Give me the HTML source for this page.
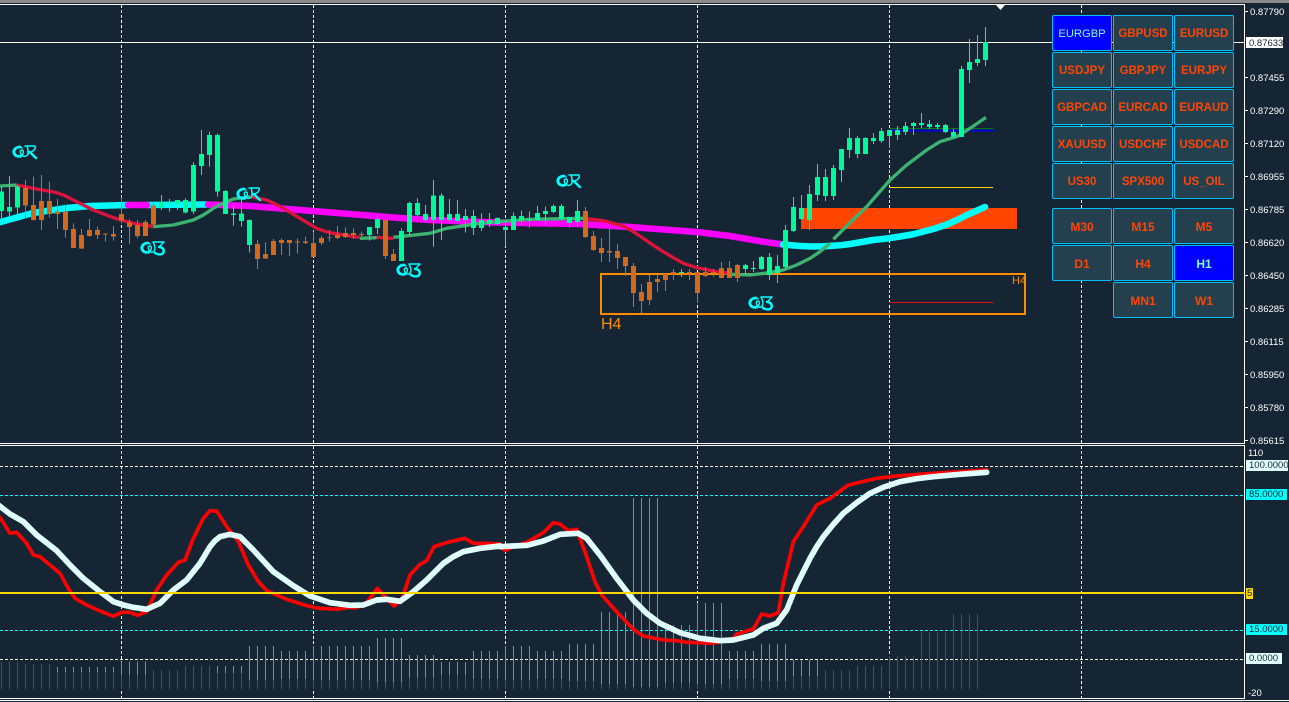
<!DOCTYPE html>
<html><head><meta charset="utf-8"><title>EURGBP H1</title>
<style>
html,body{margin:0;padding:0;width:1289px;height:702px;overflow:hidden;background:#152533;font-family:"Liberation Sans",sans-serif}
#c{position:absolute;left:0;top:0}
.b{position:absolute;width:58px;height:34px;border:1px solid #00bfff;border-radius:2px;background:#24404f;color:#ff4500;font:bold 11.5px/36px "Liberation Sans",sans-serif;text-align:center}
.a{background:#0000ff;color:#7fffd4}
.t{font-size:12px}
.l{position:absolute;left:1250px;color:#fff;font-size:9.5px;line-height:11px;height:11px;white-space:nowrap;margin-top:1px}
.x{position:absolute;left:1246px;height:11px;color:#152533;font-size:9.5px;line-height:11px;padding-left:3px;white-space:nowrap;box-sizing:border-box}
.h{position:absolute;color:#ff8c00;white-space:nowrap}
</style></head><body>
<svg id="c" width="1289" height="702" viewBox="0 0 1289 702" fill="none">
<rect x="0" y="0" width="1289" height="3" fill="#8a8a8a"/>
<g shape-rendering="crispEdges">
<rect x="0" y="4" width="1245" height="1" fill="#fff"/>
<rect x="0" y="443" width="1245" height="1" fill="#fff"/>
<rect x="0" y="445" width="1245" height="1" fill="#fff"/>
<rect x="0" y="698" width="1245" height="1" fill="#fff"/>
<rect x="0" y="700" width="1289" height="1" fill="#fff"/>
<rect x="1244" y="4" width="1" height="440" fill="#fff"/>
<rect x="1244" y="445" width="1" height="254" fill="#fff"/>
<path d="M121.5 5V443M313.5 5V443M505.5 5V443M697.5 5V443M889.5 5V443M1081.5 5V443M121.5 446V698M313.5 446V698M505.5 446V698M697.5 446V698M889.5 446V698M1081.5 446V698" stroke="#fff" stroke-dasharray="3 2"/>
<path d="M0 466.5H1244M0 659.5H1244" stroke="#fff" stroke-dasharray="3 2"/>
<path d="M0 495.5H1244M0 630.5H1244" stroke="#00ffff" stroke-dasharray="3 2"/>
<path d="M1245 11.5h3M1245 77.5h3M1245 110.5h3M1245 143.5h3M1245 176.5h3M1245 209.5h3M1245 242.5h3M1245 275.5h3M1245 308.5h3M1245 341.5h3M1245 374.5h3M1245 407.5h3M1245 440.5h3" stroke="#fff"/>
<rect x="0" y="42" width="1245" height="1" fill="#fff"/>
<rect x="801" y="208" width="216" height="21" fill="#ff4500"/>
<path d="M889 187.5H993" stroke="#ffd700"/>
<path d="M889 128.5H993" stroke="#008000"/>
<path d="M889 130.5H993" stroke="#0000e0" stroke-width="2"/>
<path d="M889 302.5H993" stroke="#e01010"/>
<rect x="601" y="274" width="424" height="40" stroke="#ff8c00" stroke-width="2"/>
</g>
<path d="M996 5H1005L1000.5 10Z" fill="#fff"/>

<!-- thick MA -->
<g stroke-width="6.5" stroke-linecap="round" stroke-linejoin="round">
<path stroke="#00ffff" d="M-3 223L33 213L67 208L90 206L128 205M147 205L208 204.5"/>
<path stroke="#ff00ff" d="M128 205H147M208 204.5L250 206L300 210L350 214L400 218L430 220L480 222L520 223L580 224L630 227L697 232L730 236L763 241.7L783 244.5"/>
<path stroke="#00ffff" d="M783 244.5L800 246L812 246.5L825 246.3L840 245.3L850 244L862 242L873 240L887 238.5L900 236.5L912 234.5L922 232L935 228.5L947 224.5L957 220L967 215L977 210.5L985 207"/>
</g>
<!-- thin MA -->
<g stroke-width="10" stroke-linejoin="round">
<g transform="translate(0,130) scale(.33333)">
<path stroke="#3cb371" d="M0 168L50 165M460 290L520 285L580 270L610 255L640 235L670 219L700 207L750 200M1080 325L1130 323M1180 322L1290 310"/>
<path stroke="#dc143c" d="M50 165L100 175L170 188L195 197L220 210L280 240L340 263L400 280L460 290M750 200L800 210L825 221L850 235L900 265L950 295L975 304L1000 310L1080 323M1130 322L1180 325"/>
</g>
<g transform="translate(430,170) scale(.33333)">
<path stroke="#3cb371" d="M0 190L50 175L130 163L200 155L300 148L460 145M900 313L960 315L1010 309L1060 300L1100 285L1140 265L1170 245L1200 220"/>
<path stroke="#dc143c" d="M460 145L520 152L580 168L610 185L640 205L670 226L700 245L730 263L760 280L800 293L850 303L900 310"/>
</g>
<g transform="translate(780,0) scale(.33333)">
<path stroke="#3cb371" d="M160 718L210 668L260 620L295 580L330 540L380 495L440 450L480 425L530 410L570 385L618 352"/>
</g>
</g>

<!-- candles -->
<g shape-rendering="crispEdges">
<g transform="translate(0,130) scale(1,.33333)">
<path stroke="#00fa9a" d="M1.5 170V270M9.5 138V258M17.5 165V258M161.5 195V240M169.5 207V245M177.5 210V240M185.5 205V250M193.5 97V252M201.5 0V135M209.5 5V110M217.5 10V200M225.5 180V252M233.5 225V287M241.5 205V290M249.5 268V367M369.5 291V332M377.5 255V312M401.5 295V393M409.5 215V315M417.5 205V258M425.5 225V275"/>
<path stroke="#00fa9a" stroke-width="5" d="M1.5 185V243M9.5 231V245M17.5 170V232M161.5 216V232M169.5 216V220M177.5 210V222M185.5 210V247M193.5 105V245M201.5 72V108M209.5 15V75M217.5 15V185M225.5 183V252M233.5 250V255M241.5 250V273M249.5 270V345M369.5 291V315M377.5 267V294M401.5 303V393M409.5 219V306M417.5 219V255M425.5 252V270"/>
<path stroke="#d2691e" d="M25.5 150V265M33.5 140V272M41.5 135V300M49.5 155V263M57.5 207V297M65.5 225V323M73.5 280V354M81.5 297V357M89.5 267V320M97.5 290V327M105.5 310V335M113.5 288V332M121.5 205V280M129.5 268V342M137.5 270V325M145.5 270V318M153.5 220V290M257.5 330V417M265.5 337V387M273.5 327V375M281.5 325V375M289.5 330V378M297.5 325V370M305.5 320V342M313.5 305V381M321.5 318V345M329.5 300V335M337.5 288V327M345.5 292V324M353.5 295V327M361.5 305V330M385.5 265V387M393.5 357V393"/>
<path stroke="#d2691e" stroke-width="5" d="M25.5 174V227M33.5 225V270M41.5 213V270M49.5 213V252M57.5 245V252M65.5 244V300M73.5 297V354M81.5 315V355M89.5 300V318M97.5 300V315M105.5 310V313M113.5 312V320M121.5 252V272M129.5 278V291M137.5 285V318M145.5 276V318M153.5 227V283M257.5 342V387M265.5 372V385M273.5 333V375M281.5 330V339M289.5 330V339M297.5 334V338M305.5 334V339M313.5 339V381M321.5 324V339M329.5 321V323M337.5 315V324M345.5 309V321M353.5 309V315M361.5 312V315M385.5 270V378M393.5 372V393"/>
</g>
<g transform="translate(0,170) scale(1,.33333)">
<path stroke="#00fa9a" d="M433.5 30V230M441.5 70V210M449.5 87V157M457.5 90V160M465.5 117V188M473.5 120V195M481.5 130V183M489.5 129V171M497.5 142V165M505.5 150V230M513.5 127V180M521.5 122V165M529.5 125V173M537.5 108V150M545.5 110V165M553.5 103V130M561.5 102V150M569.5 141V172M577.5 90V170M681.5 297V321M745.5 282V312M753.5 273V306M761.5 258V300M769.5 249V330M777.5 255V339M785.5 165V295"/>
<path stroke="#00fa9a" stroke-width="5" d="M433.5 77V150M441.5 77V150M449.5 132V150M457.5 132V153M465.5 138V150M473.5 138V174M481.5 150V174M489.5 150V162M497.5 144V162M505.5 171V180M513.5 138V180M521.5 138V150M529.5 147V150M537.5 129V150M545.5 123V132M553.5 108V126M561.5 108V147M569.5 141V159M577.5 123V156M681.5 306V309M745.5 285V297M753.5 294V297M761.5 261V297M769.5 261V315M777.5 288V309M785.5 180V291"/>
<path stroke="#d2691e" d="M585.5 111V204M593.5 183V243M601.5 204V276M609.5 177V276M617.5 222V297M625.5 261V318M633.5 279V411M641.5 342V429M649.5 315V405M657.5 315V366M665.5 309V363M673.5 297V330M689.5 297V330M697.5 306V399M705.5 291V322M713.5 297V320M721.5 276V324M729.5 273V324M737.5 282V336"/>
<path stroke="#d2691e" stroke-width="5" d="M585.5 123V201M593.5 198V240M601.5 234V249M609.5 243V248M617.5 243V264M625.5 261V288M633.5 288V369M641.5 366V393M649.5 336V390M657.5 327V336M665.5 312V330M673.5 306V312M689.5 306V311M697.5 306V369M705.5 306V318M713.5 306V309M721.5 294V324M729.5 294V324M737.5 285V324"/>
</g>
<g transform="scale(1,.33333)">
<path stroke="#00fa9a" d="M785.5 675V700M793.5 591V696M801.5 585V660M809.5 555V690M817.5 492V603M825.5 507V603M833.5 495V600M841.5 447V546M849.5 384V474M857.5 408V474M865.5 411V462M873.5 399V432M881.5 384V429M889.5 390V444M897.5 378V420M905.5 366V405M913.5 366V405M921.5 339V384M929.5 360V387M937.5 369V387M945.5 372V399M953.5 387V411M961.5 198V411M969.5 117V249M977.5 105V198M985.5 81V198"/>
<path stroke="#00fa9a" stroke-width="5" d="M793.5 621V693M801.5 624V657M809.5 582V660M817.5 531V585M825.5 531V588M833.5 504V588M841.5 447V510M849.5 414V450M857.5 414V462M865.5 414V462M873.5 414V423M881.5 393V423M889.5 390V408M897.5 390V405M905.5 378V396M913.5 369V378M921.5 369V375M929.5 372V381M937.5 375V381M945.5 375V396M953.5 396V411M961.5 207V411M969.5 186V210M977.5 177V189M985.5 126V180"/>
</g>
</g>

<!-- ornaments -->
<g stroke="#00ffff" fill="none" stroke-linecap="round" stroke-linejoin="round">
<g transform="translate(12,145)"><path stroke-width="2.8" d="M8 2C4 2 1 5 2 8C3 11 6 12 9 11"/><path stroke-width="1.4" d="M8 2L10 3M9 11C12 9 12 5 10 5C7 5 8 9 11 11C13 12 15 11 16 9"/><path stroke-width="1.5" d="M13 1L23 1C24 4 21 7 17 7M15 1C16 3 16 6 16 9"/><path stroke-width="2.4" d="M17 7C20 8 21 11 24 13"/></g>
<g transform="translate(236,187)"><path stroke-width="2.8" d="M8 2C4 2 1 5 2 8C3 11 6 12 9 11"/><path stroke-width="1.4" d="M8 2L10 3M9 11C12 9 12 5 10 5C7 5 8 9 11 11C13 12 15 11 16 9"/><path stroke-width="1.5" d="M13 1L23 1C24 4 21 7 17 7M15 1C16 3 16 6 16 9"/><path stroke-width="2.4" d="M17 7C20 8 21 11 24 13"/></g>
<g transform="translate(556,174)"><path stroke-width="2.8" d="M8 2C4 2 1 5 2 8C3 11 6 12 9 11"/><path stroke-width="1.4" d="M8 2L10 3M9 11C12 9 12 5 10 5C7 5 8 9 11 11C13 12 15 11 16 9"/><path stroke-width="1.5" d="M13 1L23 1C24 4 21 7 17 7M15 1C16 3 16 6 16 9"/><path stroke-width="2.4" d="M17 7C20 8 21 11 24 13"/></g>
<g transform="translate(140,241)"><path stroke-width="2.8" d="M8 2C4 2 1 5 2 8C3 11 6 12 9 11"/><path stroke-width="1.4" d="M8 2L10 3M9 11C12 9 12 5 10 5C7 5 8 9 11 11C13 12 15 10 15 7C15 5 14 3 13 1L24 1L19 6"/><path stroke-width="2.4" d="M19 6C24 6 25 11 22 13C19 14 17 13 15 12"/></g>
<g transform="translate(396,263)"><path stroke-width="2.8" d="M8 2C4 2 1 5 2 8C3 11 6 12 9 11"/><path stroke-width="1.4" d="M8 2L10 3M9 11C12 9 12 5 10 5C7 5 8 9 11 11C13 12 15 10 15 7C15 5 14 3 13 1L24 1L19 6"/><path stroke-width="2.4" d="M19 6C24 6 25 11 22 13C19 14 17 13 15 12"/></g>
<g transform="translate(748,296)"><path stroke-width="2.8" d="M8 2C4 2 1 5 2 8C3 11 6 12 9 11"/><path stroke-width="1.4" d="M8 2L10 3M9 11C12 9 12 5 10 5C7 5 8 9 11 11C13 12 15 10 15 7C15 5 14 3 13 1L24 1L19 6"/><path stroke-width="2.4" d="M19 6C24 6 25 11 22 13C19 14 17 13 15 12"/></g>
</g>

<!-- lower window bars -->
<g shape-rendering="crispEdges" transform="translate(0,440) scale(1,.33333)">
<path stroke="#d01818" d="M1.5 665V747M9.5 665V747M17.5 665V747M25.5 672V747M33.5 672V747M41.5 672V747M49.5 672V747M57.5 696V747M65.5 696V747M73.5 696V747M81.5 696V747M89.5 696V747M97.5 696V747M105.5 696V747M113.5 696V747M121.5 705V747M129.5 705V747M137.5 705V747M145.5 705V747M153.5 690V747M161.5 690V747M169.5 690V747M177.5 690V747M185.5 678V747M193.5 678V747M201.5 678V747M209.5 678V747M217.5 699V747M225.5 699V747M233.5 699V747M241.5 699V747M249.5 720V747M257.5 720V747M265.5 720V747M273.5 720V747M281.5 717V747M289.5 717V747M297.5 717V747M305.5 717V747M313.5 720V747M321.5 720V747M329.5 720V747M337.5 720V747M345.5 720V747M353.5 720V747M361.5 720V747M369.5 720V747M377.5 726V747M385.5 726V747M393.5 726V747M401.5 726V747M409.5 714V747M417.5 714V747M425.5 714V747M433.5 714V747M441.5 705V747M449.5 705V747M457.5 705V747M465.5 705V747M473.5 717V747M481.5 717V747M489.5 717V747M497.5 717V747M505.5 720V747M513.5 720V747M521.5 720V747M529.5 720V747M537.5 717V747M545.5 717V747M553.5 717V747M561.5 717V747M569.5 723V747M577.5 723V747M585.5 723V747M593.5 723V747M601.5 732V747M609.5 732V747M617.5 732V747M625.5 732V747M633.5 741V747M641.5 741V747M649.5 741V747M657.5 741V747M665.5 729V747M673.5 729V747M681.5 729V747M689.5 729V747M697.5 732V747M705.5 732V747M713.5 732V747M721.5 732V747M729.5 717V747M737.5 717V747M745.5 717V747M753.5 717V747M761.5 723V747M769.5 723V747M777.5 723V747M785.5 723V747M793.5 708V747M801.5 708V747M809.5 708V747M817.5 708V747M825.5 690V747M833.5 690V747M841.5 690V747M849.5 690V747M857.5 678V747M865.5 678V747M873.5 678V747M881.5 678V747M889.5 648V747M897.5 648V747M905.5 648V747M913.5 648V747M921.5 576V747M929.5 576V747M937.5 576V747M945.5 576V747M953.5 522V747M961.5 522V747M969.5 522V747M977.5 522V747"/>
<path stroke="#44b944" d="M57.5 681V696M65.5 681V696M73.5 681V696M81.5 681V696M89.5 681V696M97.5 681V696M105.5 681V696M113.5 681V696M121.5 665V705M129.5 665V705M137.5 665V705M145.5 665V705M217.5 678V699M225.5 678V699M233.5 678V699M241.5 678V699M249.5 618V720M257.5 618V720M265.5 618V720M273.5 618V720M281.5 633V717M289.5 633V717M297.5 633V717M305.5 633V717M313.5 618V720M321.5 618V720M329.5 618V720M337.5 618V720M345.5 618V720M353.5 618V720M361.5 618V720M369.5 618V720M377.5 594V726M385.5 594V726M393.5 594V726M401.5 594V726M409.5 645V714M417.5 645V714M425.5 645V714M433.5 645V714M441.5 666V705M449.5 666V705M457.5 666V705M465.5 666V705M473.5 633V717M481.5 633V717M489.5 633V717M497.5 633V717M505.5 618V720M513.5 618V720M521.5 618V720M529.5 618V720M537.5 633V717M545.5 633V717M553.5 633V717M561.5 633V717M569.5 612V723M577.5 612V723M585.5 612V723M593.5 612V723M601.5 516V732M609.5 516V732M617.5 516V732M625.5 516V732M633.5 174V741M641.5 174V741M649.5 174V741M657.5 174V741M665.5 555V729M673.5 555V729M681.5 555V729M689.5 555V729M697.5 489V732M705.5 489V732M713.5 489V732M721.5 489V732M729.5 633V717M737.5 633V717M745.5 633V717M753.5 633V717M761.5 612V723M769.5 612V723M777.5 612V723M785.5 612V723M793.5 660V708M801.5 660V708M809.5 660V708M817.5 660V708"/>
</g>
<!-- oscillator lines -->
<g stroke-linejoin="round" stroke-linecap="round">
<g transform="translate(0,440) scale(.33333)">
<path stroke="#ff0000" stroke-width="11" d="M0 232L30 280L50 277L80 310L100 345L120 350L150 375L180 400L205 445L225 475L260 495L300 513L340 529L365 517L390 517L412 526L440 515L470 450L500 405L535 367L555 360L580 295L610 235L630 212L650 213L680 260L715 305L745 375L775 425L800 452L860 478L910 494L950 504L1010 508L1040 503L1070 503L1100 488L1132 445L1160 475L1182 498L1205 480L1230 405L1260 373L1280 362L1302 320L1350 305L1395 295L1420 310L1450 310L1500 312"/>
<path stroke="#e0ffff" stroke-width="17" d="M-5 195L30 222L70 245L110 285L170 332L210 375L250 415L300 455L340 485L370 495L400 502L440 508L480 490L520 450L560 420L600 370L630 320L645 302L660 290L690 283L720 290L760 330L820 395L880 437L930 468L990 488L1050 496L1090 495L1130 480L1160 478L1200 484L1240 455L1280 420L1330 370L1360 350L1390 335L1440 325L1500 318"/>
</g>
<g transform="translate(500,440) scale(.33333)">
<path stroke="#ff0000" stroke-width="11" d="M0 320L16 331L40 320L80 307L130 278L160 248L180 252L205 272L230 268L260 350L285 425L305 465L350 515L400 568L430 588L490 600L530 602L560 607L640 610L700 595L710 582L760 567L785 522L810 528L835 518L850 430L880 305L910 260L950 195L990 175L1045 135L1130 115L1190 108L1300 100L1460 90"/>
<path stroke="#e0ffff" stroke-width="17" d="M0 320L80 316L130 303L180 283L235 280L260 295L300 345L350 415L400 480L440 520L480 550L540 578L600 595L660 602L700 600L760 585L790 565L830 550L860 510L890 435L910 395L930 355L950 320L970 290L1000 253L1030 220L1070 188L1110 160L1150 142L1200 125L1250 116L1300 110L1380 103L1460 97"/>
</g>
</g>
<rect x="0" y="592" width="1245" height="2" fill="#ffd700" shape-rendering="crispEdges"/>
</svg>

<div class="h" style="left:601px;top:316px;font-size:16px;line-height:17px">H4</div>
<div class="h" style="left:1012px;top:275px;font-size:11px;line-height:12px">H4</div>

<div class="l" style="top:6px">0.87790</div>
<div class="x" style="top:37px;width:37px;background:#fff;left:1246px;line-height:13px;height:11px">0.87633</div>
<div class="l" style="top:72px">0.87455</div>
<div class="l" style="top:105px">0.87290</div>
<div class="l" style="top:138px">0.87120</div>
<div class="l" style="top:171px">0.86955</div>
<div class="l" style="top:204px">0.86785</div>
<div class="l" style="top:237px">0.86620</div>
<div class="l" style="top:270px">0.86450</div>
<div class="l" style="top:303px">0.86285</div>
<div class="l" style="top:336px">0.86115</div>
<div class="l" style="top:369px">0.85950</div>
<div class="l" style="top:402px">0.85780</div>
<div class="l" style="top:435px">0.85615</div>
<div class="l" style="top:447px;left:1248px">110</div>
<div class="x" style="top:460px;width:42px;background:#e0ffff">100.0000</div>
<div class="x" style="top:489px;width:41px;background:#00ffff">85.0000</div>
<div class="x" style="top:588px;width:7px;background:#ffd700;padding-left:1px">5</div>
<div class="x" style="top:624px;width:41px;background:#00ffff">15.0000</div>
<div class="x" style="top:653px;width:36px;background:#e0ffff">0.0000</div>
<div class="l" style="top:687px;left:1248px">-20</div>

<div class="b a" style="left:1052px;top:15px;font-weight:normal;font-size:11.2px">EURGBP</div>
<div class="b" style="left:1113px;top:15px">GBPUSD</div>
<div class="b" style="left:1174px;top:15px">EURUSD</div>
<div class="b" style="left:1052px;top:52px">USDJPY</div>
<div class="b" style="left:1113px;top:52px">GBPJPY</div>
<div class="b" style="left:1174px;top:52px">EURJPY</div>
<div class="b" style="left:1052px;top:89px">GBPCAD</div>
<div class="b" style="left:1113px;top:89px">EURCAD</div>
<div class="b" style="left:1174px;top:89px">EURAUD</div>
<div class="b" style="left:1052px;top:126px">XAUUSD</div>
<div class="b" style="left:1113px;top:126px">USDCHF</div>
<div class="b" style="left:1174px;top:126px">USDCAD</div>
<div class="b" style="left:1052px;top:163px">US30</div>
<div class="b" style="left:1113px;top:163px">SPX500</div>
<div class="b" style="left:1174px;top:163px">US_OIL</div>
<div class="b t" style="left:1052px;top:208px">M30</div>
<div class="b t" style="left:1113px;top:208px">M15</div>
<div class="b t" style="left:1174px;top:208px">M5</div>
<div class="b t" style="left:1052px;top:245px">D1</div>
<div class="b t" style="left:1113px;top:245px">H4</div>
<div class="b t a" style="left:1174px;top:245px">H1</div>
<div class="b t" style="left:1113px;top:282px">MN1</div>
<div class="b t" style="left:1174px;top:282px">W1</div>
</body></html>
